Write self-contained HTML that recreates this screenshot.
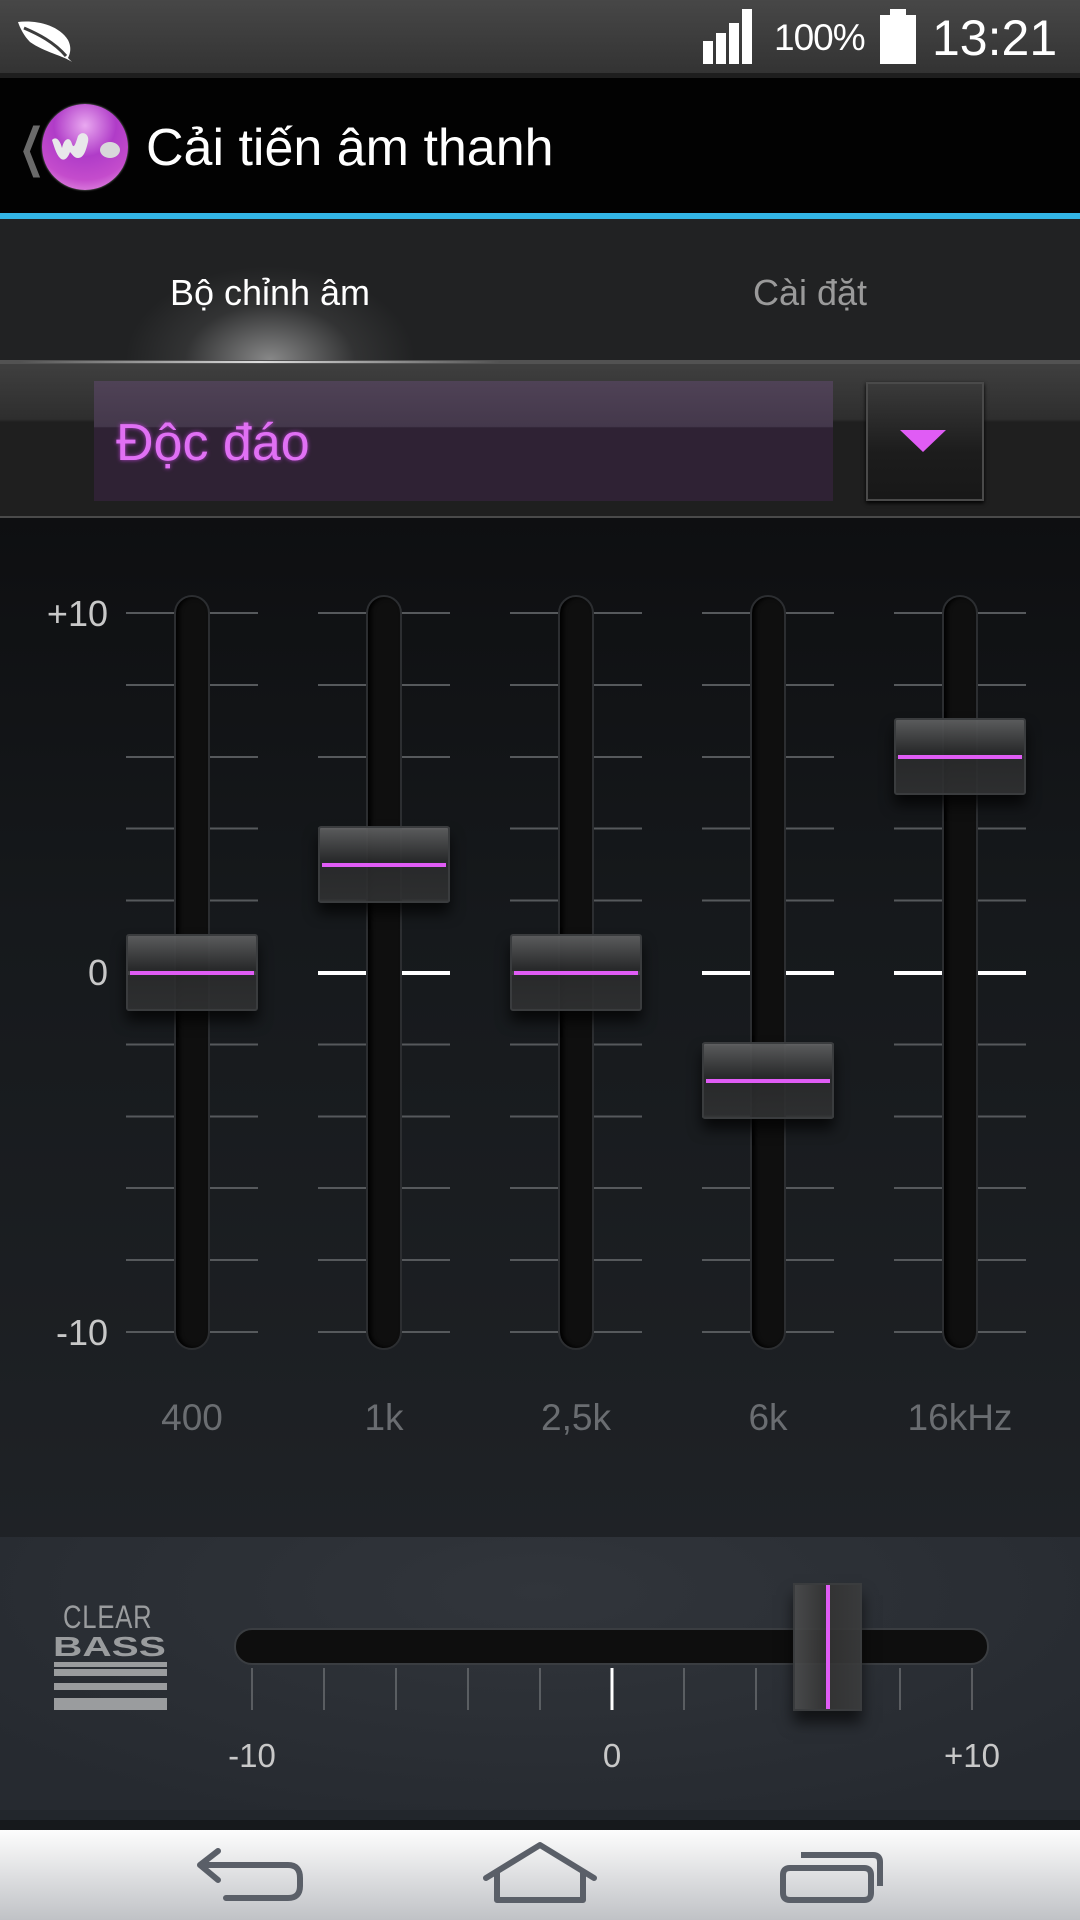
<!DOCTYPE html>
<html><head><meta charset="utf-8"><style>
*{margin:0;padding:0;box-sizing:border-box}
body{width:1080px;height:1920px;overflow:hidden;background:#16191c;font-family:"Liberation Sans","DejaVu Sans",sans-serif;position:relative}
.a{position:absolute}
.col{position:absolute;top:612px;width:132px;height:724px;background:repeating-linear-gradient(to bottom,#56595c 0 2px,transparent 2px 71.9px)}
.zero{position:absolute;left:0;width:132px;top:359px;height:4px;background:#fff}
.trk{position:absolute;left:48px;top:-17px;width:36px;height:755px;border-radius:18px;background:#0f0f0f;border:2px solid #2c2e31;box-shadow:inset 3px 0 4px #000}
.thumb{position:absolute;left:0;width:132px;height:77px;border:2px solid #3a3c3e;border-radius:3px;background:linear-gradient(rgba(95,96,97,.93),rgba(42,43,44,.93) 45%,rgba(42,43,44,.9) 50%,rgba(48,49,50,.9));box-shadow:0 10px 14px rgba(0,0,0,.7)}
.thumb::after{content:"";position:absolute;left:2px;right:2px;top:35px;height:4px;background:#e05cf5}
.lbl{position:absolute;width:160px;text-align:center;top:1397px;font-size:37px;color:#6a6d71}
</style></head><body>
<!-- status bar -->
<div class="a" style="left:0;top:0;width:1080px;height:73px;background:linear-gradient(#474747,#333)"></div>
<div class="a" style="left:0;top:73px;width:1080px;height:5px;background:#1e1e1e"></div>
<svg class="a" style="left:14px;top:18px" width="60" height="46" viewBox="0 0 60 46"><path d="M4 4 C20 2 44 6 54 22 C58 30 56 36 54 40 L58 44 C50 38 30 34 16 24 C10 18 6 10 4 4Z" fill="#fff"/><path d="M10 10 C24 16 40 24 52 38" stroke="#3c3c3c" stroke-width="3" fill="none"/></svg>
<div class="a" style="left:703px;top:41px;width:10px;height:23px;background:#fff"></div>
<div class="a" style="left:716px;top:33px;width:10px;height:31px;background:#fff"></div>
<div class="a" style="left:729px;top:23px;width:10px;height:41px;background:#fff"></div>
<div class="a" style="left:742px;top:9px;width:10px;height:55px;background:#fff"></div>
<div class="a" style="left:774px;top:17px;font-size:37px;color:#fff;letter-spacing:-1px">100%</div>
<div class="a" style="left:890px;top:9px;width:16px;height:7px;background:#fff"></div>
<div class="a" style="left:880px;top:15px;width:36px;height:49px;background:#fff"></div>
<div class="a" style="left:932px;top:9px;font-size:50px;color:#fff">13:21</div>
<!-- action bar -->
<div class="a" style="left:0;top:78px;width:1080px;height:135px;background:#020202"></div>
<div class="a" style="left:10px;top:118px;font-size:52px;color:#6a6a6a;transform:scaleX(.6)">&#10094;</div>
<div class="a" style="left:42px;top:104px;width:86px;height:86px;border-radius:50%;background:radial-gradient(circle at 50% 25%,#e9a8f0,#b03cc8 40%,#c44ccc 70%,#f0a8ec);box-shadow:0 0 2px #fff8"></div>
<svg class="a" style="left:48px;top:128px" width="80" height="40" viewBox="0 0 80 40"><path d="M4 12 C8 8 12 12 14 20 C16 10 22 8 24 16 C26 22 28 14 30 8 C34 2 42 6 40 14 C38 22 36 30 30 30 C26 30 24 26 22 24 C20 30 16 34 12 30 C8 26 6 18 4 12Z" fill="#e8e8ea"/><ellipse cx="62" cy="22" rx="10" ry="8" fill="#d8d8da"/></svg>
<div class="a" style="left:146px;top:118px;font-size:52px;color:#fff">Cải tiến âm thanh</div>
<div class="a" style="left:0;top:213px;width:1080px;height:6px;background:#33b5e5"></div>
<!-- tabs -->
<div class="a" style="left:0;top:219px;width:1080px;height:141px;background:#212223"></div>
<div class="a" style="left:70px;top:250px;width:400px;height:110px;background:radial-gradient(ellipse 170px 110px at 50% 100%,rgba(170,170,170,.75),rgba(90,90,90,.3) 50%,transparent 85%)"></div>
<div class="a" style="left:0;top:360px;width:1080px;height:4px;background:#525252"></div>
<div class="a" style="left:20px;top:361px;width:480px;height:2px;background:linear-gradient(90deg,transparent,#ddd 50%,transparent)"></div>
<div class="a" style="left:90px;top:272px;width:360px;text-align:center;font-size:36px;color:#fff">Bộ chỉnh âm</div>
<div class="a" style="left:630px;top:272px;width:360px;text-align:center;font-size:36px;color:#9a9a9a">Cài đặt</div>
<!-- dropdown -->
<div class="a" style="left:0;top:364px;width:1080px;height:153px;background:linear-gradient(#3f3f3f,#2e2e2e 36%,#1f1f1f 38%,#1f1f1f)"></div>
<div class="a" style="left:94px;top:381px;width:739px;height:120px;background:linear-gradient(#4f4256,#44384b 38%,#2f2234 39%,#2f2234)"></div>
<div class="a" style="left:116px;top:413px;font-size:52px;color:#e070f4;text-shadow:0 0 4px #b040c8">Độc đáo</div>
<div class="a" style="left:866px;top:382px;width:118px;height:119px;border:2px solid #4a4a4a;background:linear-gradient(#3a3a3a,#1c1c1c 60%,#181818);box-shadow:0 2px 4px #000"></div>
<div class="a" style="left:900px;top:430px;width:0;height:0;border-left:23px solid transparent;border-right:23px solid transparent;border-top:22px solid #e05cf5"></div>
<div class="a" style="left:0;top:516px;width:1080px;height:2px;background:#4a4a4a"></div>
<!-- EQ -->
<div class="a" style="left:0;top:518px;width:1080px;height:1019px;background:linear-gradient(#0e0f11,#16191c 40%,#1f2226)"></div>
<div class="a" style="left:30px;top:593px;width:78px;text-align:right;font-size:36px;color:#c8c8c8">+10</div>
<div class="a" style="left:30px;top:952px;width:78px;text-align:right;font-size:36px;color:#c8c8c8">0</div>
<div class="a" style="left:30px;top:1312px;width:78px;text-align:right;font-size:36px;color:#c8c8c8">-10</div>

<div class="col" style="left:126px"><div class="zero"></div><div class="trk"></div><div class="thumb" style="top:322px"></div></div>
<div class="col" style="left:318px"><div class="zero"></div><div class="trk"></div><div class="thumb" style="top:214px"></div></div>
<div class="col" style="left:510px"><div class="zero"></div><div class="trk"></div><div class="thumb" style="top:322px"></div></div>
<div class="col" style="left:702px"><div class="zero"></div><div class="trk"></div><div class="thumb" style="top:430px"></div></div>
<div class="col" style="left:894px"><div class="zero"></div><div class="trk"></div><div class="thumb" style="top:106px"></div></div>

<div class="lbl" style="left:112px">400</div>
<div class="lbl" style="left:304px">1k</div>
<div class="lbl" style="left:496px">2,5k</div>
<div class="lbl" style="left:688px">6k</div>
<div class="lbl" style="left:880px">16kHz</div>
<!-- clear bass -->
<div class="a" style="left:0;top:1537px;width:1080px;height:283px;background:radial-gradient(ellipse 700px 250px at 50% 20%,#31353b,#262a30);border-bottom:10px solid #22262c"></div>
<div class="a" style="left:63px;top:1599px;font-size:32px;color:#9a9c9e;transform:scaleX(.8);transform-origin:left;letter-spacing:1px">CLEAR</div>
<div class="a" style="left:53px;top:1631px;font-size:28px;font-weight:bold;color:#9a9c9e;transform:scaleX(1.45);transform-origin:left">BASS</div>
<div class="a" style="left:54px;top:1662px;width:113px;height:5px;background:#9a9c9e"></div>
<div class="a" style="left:54px;top:1669px;width:113px;height:7px;background:#9a9c9e"></div>
<div class="a" style="left:54px;top:1683px;width:113px;height:7px;background:#9a9c9e"></div>
<div class="a" style="left:54px;top:1698px;width:113px;height:12px;background:#9a9c9e"></div>
<div class="a" style="left:234px;top:1628px;width:755px;height:37px;border-radius:18px;background:#0e0e0e;border:2px solid #3a3d41"></div>
<svg class="a" style="left:240px;top:1668px" width="740" height="44"><g stroke="#6a6d70" stroke-width="1.5"><line x1="12" y1="0" x2="12" y2="42"/><line x1="84" y1="0" x2="84" y2="42"/><line x1="156" y1="0" x2="156" y2="42"/><line x1="228" y1="0" x2="228" y2="42"/><line x1="300" y1="0" x2="300" y2="42"/><line x1="444" y1="0" x2="444" y2="42"/><line x1="516" y1="0" x2="516" y2="42"/><line x1="588" y1="0" x2="588" y2="42"/><line x1="660" y1="0" x2="660" y2="42"/><line x1="732" y1="0" x2="732" y2="42"/></g><line x1="372" y1="0" x2="372" y2="42" stroke="#fff" stroke-width="3"/></svg>
<div class="a" style="left:793px;top:1583px;width:69px;height:128px;border:2px solid #3a3c3e;background:linear-gradient(90deg,rgba(74,75,76,.92),rgba(51,51,51,.9) 50%,rgba(58,59,60,.92));box-shadow:0 12px 14px rgba(0,0,0,.6)"></div>
<div class="a" style="left:826px;top:1585px;width:4px;height:124px;background:#e05cf5"></div>
<div class="a" style="left:192px;top:1737px;width:120px;text-align:center;font-size:33px;color:#c8c8c8">-10</div>
<div class="a" style="left:552px;top:1737px;width:120px;text-align:center;font-size:33px;color:#c8c8c8">0</div>
<div class="a" style="left:912px;top:1737px;width:120px;text-align:center;font-size:33px;color:#c8c8c8">+10</div>
<!-- nav bar -->
<div class="a" style="left:0;top:1830px;width:1080px;height:90px;background:linear-gradient(#fdfdfd,#c0c2c6)"></div>
<svg class="a" style="left:0;top:1830px" width="1080" height="90" fill="none" stroke="#5a5f68" stroke-width="6" stroke-linecap="round" stroke-linejoin="round">
<path d="M218 21 L200 35 L218 50 M202 35 L288 35 Q300 35 300 48 L300 56 Q300 68 288 68 L226 68"/>
<path d="M486 48 L540 15 L594 48 M497 42 L497 70 L583 70 L583 42"/>
<path d="M790 38 L864 38 Q871 38 871 45 L871 63 Q871 70 864 70 L790 70 Q783 70 783 63 L783 45 Q783 38 790 38Z"/>
<path d="M801 25 L873 25 Q880 25 880 32 L880 56" stroke-linecap="butt"/>
</svg>
</body></html>
